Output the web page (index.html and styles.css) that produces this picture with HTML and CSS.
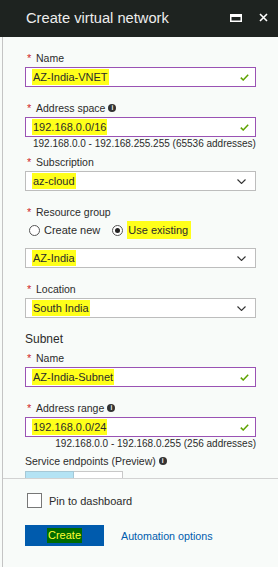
FILE: index.html
```html
<!DOCTYPE html>
<html lang="en">
<head>
  <meta charset="UTF-8" />
  <title>Create virtual network</title>
  <link rel="stylesheet" href="styles.css">
</head>
<body>

  <div class="blade">
    <header class="blade-header">
      <h1>Create virtual network</h1>
      <div class="header-icons">
        <svg class="icon-max" width="12" height="8" viewBox="0 0 12 8">
          <rect x="0.75" y="0.75" width="10.5" height="6.5" fill="none" stroke="#fff" stroke-width="1.5"/>
          <rect x="0" y="0" width="12" height="3" fill="#fff"/>
        </svg>
        <svg class="icon-close" width="9" height="9" viewBox="0 0 9 9">
          <path d="M1 1 L8 8 M8 1 L1 8" stroke="#fff" stroke-width="1.6"/>
        </svg>
      </div>
    </header>

    <div class="blade-body">
      <div class="form">

        <div class="field">
          <div class="field-label"><span class="req">*</span>Name</div>
          <div class="input valid">
            <span class="hl">AZ-India-VNET</span>
            <svg class="check" width="9" height="7" viewBox="0 0 9 7"><path d="M0.8 3.6 L3.2 6 L8.2 0.8" fill="none" stroke="#5ea300" stroke-width="1.5"/></svg>
          </div>
        </div>

        <div class="field">
          <div class="field-label"><span class="req">*</span>Address space <span class="info">i</span></div>
          <div class="input valid">
            <span class="hl">192.168.0.0/16</span>
            <svg class="check" width="9" height="7" viewBox="0 0 9 7"><path d="M0.8 3.6 L3.2 6 L8.2 0.8" fill="none" stroke="#5ea300" stroke-width="1.5"/></svg>
          </div>
          <div class="hint">192.168.0.0 - 192.168.255.255 (65536 addresses)</div>
        </div>

        <div class="field tight">
          <div class="field-label"><span class="req">*</span>Subscription</div>
          <div class="input select">
            <span class="hl">az-cloud</span>
            <svg class="chevron" width="9" height="5" viewBox="0 0 9 5"><path d="M0.5 0.5 L4.5 4.5 L8.5 0.5" fill="none" stroke="#333" stroke-width="1.1"/></svg>
          </div>
        </div>

        <div class="field">
          <div class="field-label"><span class="req">*</span>Resource group</div>
          <div class="radio-row">
            <label class="radio"><span class="radio-dot"></span>Create new</label>
            <label class="radio checked"><span class="radio-dot"></span><span class="hl hl-tall">Use existing</span></label>
          </div>
          <div class="input select spaced">
            <span class="hl">AZ-India</span>
            <svg class="chevron" width="9" height="5" viewBox="0 0 9 5"><path d="M0.5 0.5 L4.5 4.5 L8.5 0.5" fill="none" stroke="#333" stroke-width="1.1"/></svg>
          </div>
        </div>

        <div class="field">
          <div class="field-label"><span class="req">*</span>Location</div>
          <div class="input select">
            <span class="hl">South India</span>
            <svg class="chevron" width="9" height="5" viewBox="0 0 9 5"><path d="M0.5 0.5 L4.5 4.5 L8.5 0.5" fill="none" stroke="#333" stroke-width="1.1"/></svg>
          </div>
        </div>

        <h2 class="section-title">Subnet</h2>

        <div class="field tight">
          <div class="field-label"><span class="req">*</span>Name</div>
          <div class="input valid">
            <span class="hl">AZ-India-Subnet</span>
            <svg class="check" width="9" height="7" viewBox="0 0 9 7"><path d="M0.8 3.6 L3.2 6 L8.2 0.8" fill="none" stroke="#5ea300" stroke-width="1.5"/></svg>
          </div>
        </div>

        <div class="field">
          <div class="field-label"><span class="req">*</span>Address range <span class="info">i</span></div>
          <div class="input valid">
            <span class="hl">192.168.0.0/24</span>
            <svg class="check" width="9" height="7" viewBox="0 0 9 7"><path d="M0.8 3.6 L3.2 6 L8.2 0.8" fill="none" stroke="#5ea300" stroke-width="1.5"/></svg>
          </div>
          <div class="hint hint-right">192.168.0.0 - 192.168.0.255 (256 addresses)</div>
        </div>

        <div class="field service">
          <div class="field-label">Service endpoints (Preview) <span class="info">i</span></div>
          <div class="toggle">
            <span class="toggle-on"></span>
            <span class="toggle-off"></span>
          </div>
        </div>

      </div>

      <div class="footer">
        <label class="pin"><span class="checkbox"></span>Pin to dashboard</label>
        <div class="actions">
          <button class="create-btn"><span class="hl-dark">Create</span></button>
          <a class="link" href="#">Automation options</a>
        </div>
      </div>
    </div>
  </div>

</body>
</html>
```

FILE: styles.css
```css
:root {
  --header-bg: #1e2320;
  --page-bg: #f8fbf9;
  --text-color: #2b2b2b;
  --purple: #9a52b4;
  --gray-border: #bdbdbd;
  --blue: #005bad;
  --highlight: #ffff1a;
}

* {
  box-sizing: border-box;
  margin: 0;
  padding: 0;
}

body {
  font-family: "Liberation Sans", Arial, sans-serif;
  background-color: var(--page-bg);
  color: var(--text-color);
  width: 278px;
  height: 567px;
  overflow: hidden;
}

.blade {
  display: flex;
  flex-direction: column;
  height: 567px;
}

.blade-header {
  height: 37px;
  flex-shrink: 0;
  background-color: var(--header-bg);
  display: flex;
  align-items: center;
  padding: 0 10px 2px 26px;
}

.blade-header h1 {
  flex: 1;
  font-size: 14.7px;
  font-weight: normal;
  color: #ededed;
}

.header-icons {
  display: flex;
  align-items: center;
  gap: 17px;
}

.blade-body {
  flex: 1;
  margin-left: 2px;
  border-left: 1px solid #c4c4c4;
  display: flex;
  flex-direction: column;
}

.form {
  padding: 0 22px 0 22px;
  display: flex;
  flex-direction: column;
}

.field {
  margin-top: 14px;
  display: flex;
  flex-direction: column;
}

.field.tight {
  margin-top: 4px;
}

.field-label {
  font-size: 10.5px;
  line-height: 14px;
  height: 14px;
  margin-bottom: 2px;
  display: flex;
  align-items: center;
}

.req {
  color: #d0262b;
  font-size: 11px;
  width: 11px;
  padding-left: 2px;
}

.info {
  display: inline-flex;
  align-items: center;
  justify-content: center;
  width: 8px;
  height: 8px;
  margin-left: 3px;
  border-radius: 50%;
  background: #333;
  color: #fff;
  font-size: 6.5px;
  font-weight: bold;
  line-height: 8px;
}

.input {
  height: 20px;
  border: 1px solid var(--gray-border);
  background: #fff;
  display: flex;
  align-items: center;
  justify-content: space-between;
  padding: 0 6px 0 6px;
  font-size: 11px;
}

.input.valid {
  border-color: var(--purple);
}

.input.spaced {
  margin-top: 9px;
}

.hl {
  background: var(--highlight);
  line-height: 16px;
  padding: 0 1px;
}

.hl-tall {
  line-height: 18px;
  padding: 0 3px 0 1px;
}

.chevron {
  margin-right: 3px;
}

.hint {
  font-size: 10px;
  line-height: 14px;
  padding-left: 8px;
}

.hint-right {
  text-align: right;
  padding-left: 0;
}

.radio-row {
  display: flex;
  align-items: center;
  gap: 12px;
  height: 18px;
  padding-left: 4px;
  font-size: 11px;
}

.radio {
  display: flex;
  align-items: center;
  gap: 4px;
}

.radio-dot {
  width: 11px;
  height: 11px;
  border: 1px solid #555;
  border-radius: 50%;
  background: #fff;
  display: flex;
  align-items: center;
  justify-content: center;
}

.radio.checked .radio-dot::after {
  content: "";
  width: 5px;
  height: 5px;
  border-radius: 50%;
  background: #222;
}

.section-title {
  margin-top: 13px;
  font-size: 12px;
  font-weight: normal;
  line-height: 16px;
}

.field.service {
  margin-top: 3px;
}

.toggle {
  display: flex;
  height: 7px;
  margin-top: 1px;
}

.toggle-on {
  width: 49px;
  background: #b4e3f4;
  border: 1px solid #a6c8d6;
  border-bottom: none;
}

.toggle-off {
  width: 49px;
  background: #fff;
  border: 1px solid #c8c8c8;
  border-left: none;
  border-bottom: none;
}

.footer {
  border-top: 1px solid #d2d2d2;
  padding: 14px 22px 0 24px;
  display: flex;
  flex-direction: column;
}

.pin {
  display: flex;
  align-items: center;
  gap: 7px;
  font-size: 11px;
  height: 15px;
}

.checkbox {
  width: 15px;
  height: 15px;
  border: 1px solid #777;
  background: #fff;
}

.actions {
  margin-top: 17px;
  display: flex;
  align-items: center;
  gap: 17px;
  margin-left: -2px;
}

.create-btn {
  width: 79px;
  height: 21px;
  background: var(--blue);
  border: none;
  font-family: inherit;
  font-size: 11px;
  display: flex;
  align-items: center;
  justify-content: center;
}

.hl-dark {
  background: #006b00;
  color: #ffff33;
  line-height: 15px;
  padding: 0 1px;
}

.link {
  color: var(--blue);
  font-size: 10.7px;
  text-decoration: none;
}
```
